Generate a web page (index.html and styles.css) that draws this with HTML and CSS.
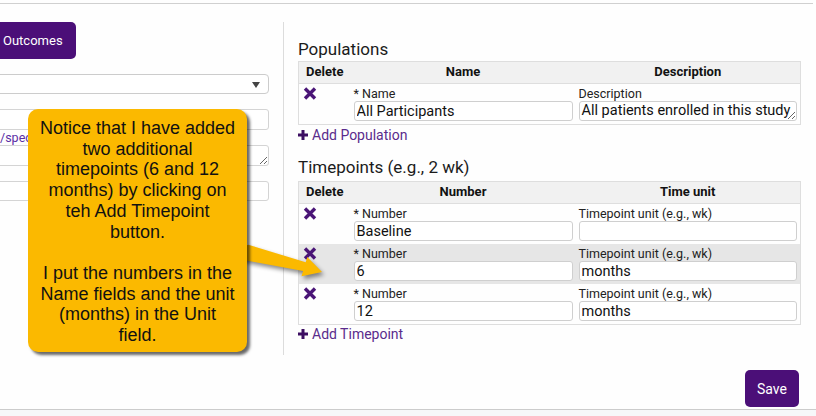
FILE: index.html
```html
<!DOCTYPE html>
<html lang="en">
<head>
<meta charset="utf-8">
<title>Populations and Timepoints</title>
<link rel="stylesheet" href="styles.css">
</head>
<body>
<div class="topline"></div>
<div class="main">
  <div class="left">
    <button class="btn btn-outcomes">Outcomes</button>
    <div class="select"><span class="caret"></span></div>
    <input class="ctl ctl-a" type="text" value="">
    <a class="url" href="#">/specification</a>
    <textarea class="ctl ctl-ta" rows="1"></textarea>
    <input class="ctl ctl-b" type="text" value="">
  </div>
  <div class="divider"></div>
  <div class="right">
    <h2 class="sec-title">Populations</h2>
    <table class="grid">
      <colgroup><col class="c-del"><col class="c-name"><col class="c-desc"></colgroup>
      <thead><tr><th>Delete</th><th>Name</th><th>Description</th></tr></thead>
      <tbody>
        <tr>
          <td class="del"><svg class="x" viewBox="0 0 14 13"><path d="M2 1.5 12 11.5M12 1.5 2 11.5"/></svg></td>
          <td><div class="lbl">* Name</div><input class="ctl" type="text" value="All Participants"></td>
          <td><div class="lbl">Description</div><textarea class="ctl ta" rows="1" wrap="off">All patients enrolled in this study</textarea></td>
        </tr>
      </tbody>
    </table>
    <a class="add" href="#"><svg class="plus" viewBox="0 0 10 10"><path d="M5 0v10M0 5h10"/></svg>Add Population</a>

    <h2 class="sec-title sec-tp">Timepoints (e.g., 2 wk)</h2>
    <table class="grid">
      <colgroup><col class="c-del"><col class="c-name"><col class="c-desc"></colgroup>
      <thead><tr><th>Delete</th><th>Number</th><th>Time unit</th></tr></thead>
      <tbody>
        <tr>
          <td class="del"><svg class="x" viewBox="0 0 14 13"><path d="M2 1.5 12 11.5M12 1.5 2 11.5"/></svg></td>
          <td><div class="lbl">* Number</div><input class="ctl" type="text" value="Baseline"></td>
          <td><div class="lbl">Timepoint unit (e.g., wk)</div><input class="ctl" type="text" value=""></td>
        </tr>
        <tr class="hl">
          <td class="del"><svg class="x" viewBox="0 0 14 13"><path d="M2 1.5 12 11.5M12 1.5 2 11.5"/></svg></td>
          <td><div class="lbl">* Number</div><input class="ctl" type="text" value="6"></td>
          <td><div class="lbl">Timepoint unit (e.g., wk)</div><input class="ctl" type="text" value="months"></td>
        </tr>
        <tr>
          <td class="del"><svg class="x" viewBox="0 0 14 13"><path d="M2 1.5 12 11.5M12 1.5 2 11.5"/></svg></td>
          <td><div class="lbl">* Number</div><input class="ctl" type="text" value="12"></td>
          <td><div class="lbl">Timepoint unit (e.g., wk)</div><input class="ctl" type="text" value="months"></td>
        </tr>
      </tbody>
    </table>
    <a class="add add-tp" href="#"><svg class="plus" viewBox="0 0 10 10"><path d="M5 0v10M0 5h10"/></svg>Add Timepoint</a>
  </div>
</div>
<div class="actions"><button class="btn btn-save">Save</button></div>
<div class="footer"></div>

<svg class="arrow" viewBox="236 236 92 46" width="92" height="46">
  <polygon points="236,249 248.3,244.7 305.7,262.3 307.3,257 322,272 301.5,276.2 303.1,270.9 233,258"/>
</svg>
<div class="callout">Notice that I have added<br>two additional<br>timepoints (6 and 12<br>months) by clicking on<br>teh Add Timepoint<br>button.<br><br>I put the numbers in the<br>Name fields and the unit<br>(months) in the Unit<br>field.</div>
</body>
</html>
```
FILE: styles.css
```css
* { box-sizing: border-box; }
html, body { margin: 0; padding: 0; }
body {
  width: 816px;
  height: 416px;
  overflow: hidden;
  position: relative;
  background: #fefefe;
  font-family: Roboto, "Liberation Sans", Arial, sans-serif;
  color: #222;
}
.topline {
  height: 4px;
  border-top: 3px solid transparent;
  border-bottom: 1px solid #d0d0d0;
  margin-right: 3px;
}
.main {
  display: flex;
  height: 352px;
}
.left {
  flex: none;
  width: 309px;
  margin-left: -40px;
  padding-top: 18px;
  display: flex;
  flex-direction: column;
  align-items: flex-start;
}
.btn {
  border: 0;
  border-radius: 5px;
  background: #4b0f78;
  color: #fff;
  font-family: Roboto, "Liberation Sans", sans-serif;
  font-size: 13.5px;
  height: 37px;
  cursor: pointer;
}
.btn-outcomes {
  height: 37px;
  font-size: 13px;
  padding: 0 13px 0 43px;
}
.select {
  position: relative;
  margin-top: 15px;
  width: 100%;
  height: 20px;
  border: 1px solid #ccc;
  border-radius: 4px;
  background: #fff;
}
.caret {
  position: absolute;
  right: 8px;
  top: 7px;
  width: 0;
  height: 0;
  border-left: 4px solid transparent;
  border-right: 4px solid transparent;
  border-top: 6px solid #444;
}
.ctl {
  display: block;
  width: 100%;
  height: 20px;
  margin: 0;
  padding: 0 2px;
  border: 1px solid #cfcfcf;
  border-radius: 3px;
  background: #fff;
  font-family: Roboto, "Liberation Sans", sans-serif;
  font-size: 14.5px;
  color: #111;
  outline: none;
}
.left .ctl { border-color: #d4d4d4; }
.ctl-a { margin-top: 15px; height: 21px; }
.url {
  display: block;
  width: 100%;
  padding-left: 40px;
  height: 15px;
  line-height: 15px;
  font-size: 12.5px;
  color: #5b2ea6;
  text-decoration: none;
  white-space: nowrap;
  overflow: hidden;
}
.ctl-ta { height: 21px; resize: vertical; overflow: hidden; }
.ctl-b { margin-top: 15px; }
.divider {
  flex: none;
  width: 1px;
  height: 333px;
  margin: 18px 0 0 14px;
  background: #dcdcdc;
}
.right {
  flex: none;
  width: 502px;
  margin-left: 14px;
  padding-top: 35px;
}
.sec-title {
  margin: 0 0 2px;
  font-size: 17px;
  font-weight: 400;
  line-height: 20px;
  color: #1b1b1b;
}
.sec-tp { margin-top: 14px; margin-bottom: 4px; }
.grid {
  width: 502px;
  border-collapse: collapse;
  border: 1px solid #dedede;
  table-layout: fixed;
}
.c-del { width: 52px; }
.c-name { width: 225px; }
.c-desc { width: 225px; }
.grid th {
  background: #f1f1f1;
  border-bottom: 1px solid #dedede;
  font-size: 13px;
  font-weight: 700;
  line-height: 16px;
  padding: 2px 4px 3px;
  text-align: center;
  color: #111;
}
.grid td {
  vertical-align: top;
  padding: 2px 3px 3px;
}
.grid td.del { padding: 3px 4px 0; }
.grid tr.hl td { background: #e6e6e6; }
.x {
  display: block;
  width: 14px;
  height: 13px;
}
.x path {
  stroke: #4a1577;
  stroke-width: 3.4;
  fill: none;
}
.lbl {
  font-size: 12.5px;
  line-height: 15px;
  color: #222;
  white-space: nowrap;
}
.ta {
  resize: vertical;
  overflow: hidden;
  white-space: pre;
  line-height: 18px;
}
.add {
  display: flex;
  align-items: center;
  margin-top: 1px;
  height: 17px;
  font-size: 14px;
  color: #5a2b8c;
  text-decoration: none;
}
.add-tp { margin-top: 0; }
.plus {
  width: 10px;
  height: 10px;
  margin-right: 4px;
}
.plus path {
  stroke: #3c0e62;
  stroke-width: 3;
  fill: none;
}
.actions {
  display: flex;
  justify-content: flex-end;
  padding: 14px 17px 0 0;
}
.btn-save {
  width: 54px;
  padding: 0;
  font-size: 14px;
}
.footer {
  margin-top: 2px;
  height: 10px;
  border-top: 1px solid #cccccc;
  background: #f6f7f9;
}
.arrow {
  position: absolute;
  left: 236px;
  top: 236px;
  overflow: visible;
  filter: drop-shadow(2px 3px 2px rgba(0, 0, 0, 0.45));
}
.arrow polygon { fill: #fbb900; }
.callout {
  position: absolute;
  left: 28px;
  top: 109px;
  width: 219px;
  height: 243px;
  padding-top: 9px;
  background: #fbb900;
  border-radius: 10px;
  box-shadow: 3px 3px 3px rgba(0, 0, 0, 0.6);
  font-family: "Liberation Sans", Arial, sans-serif;
  font-size: 18px;
  line-height: 20.7px;
  text-align: center;
  color: #111;
}
```
